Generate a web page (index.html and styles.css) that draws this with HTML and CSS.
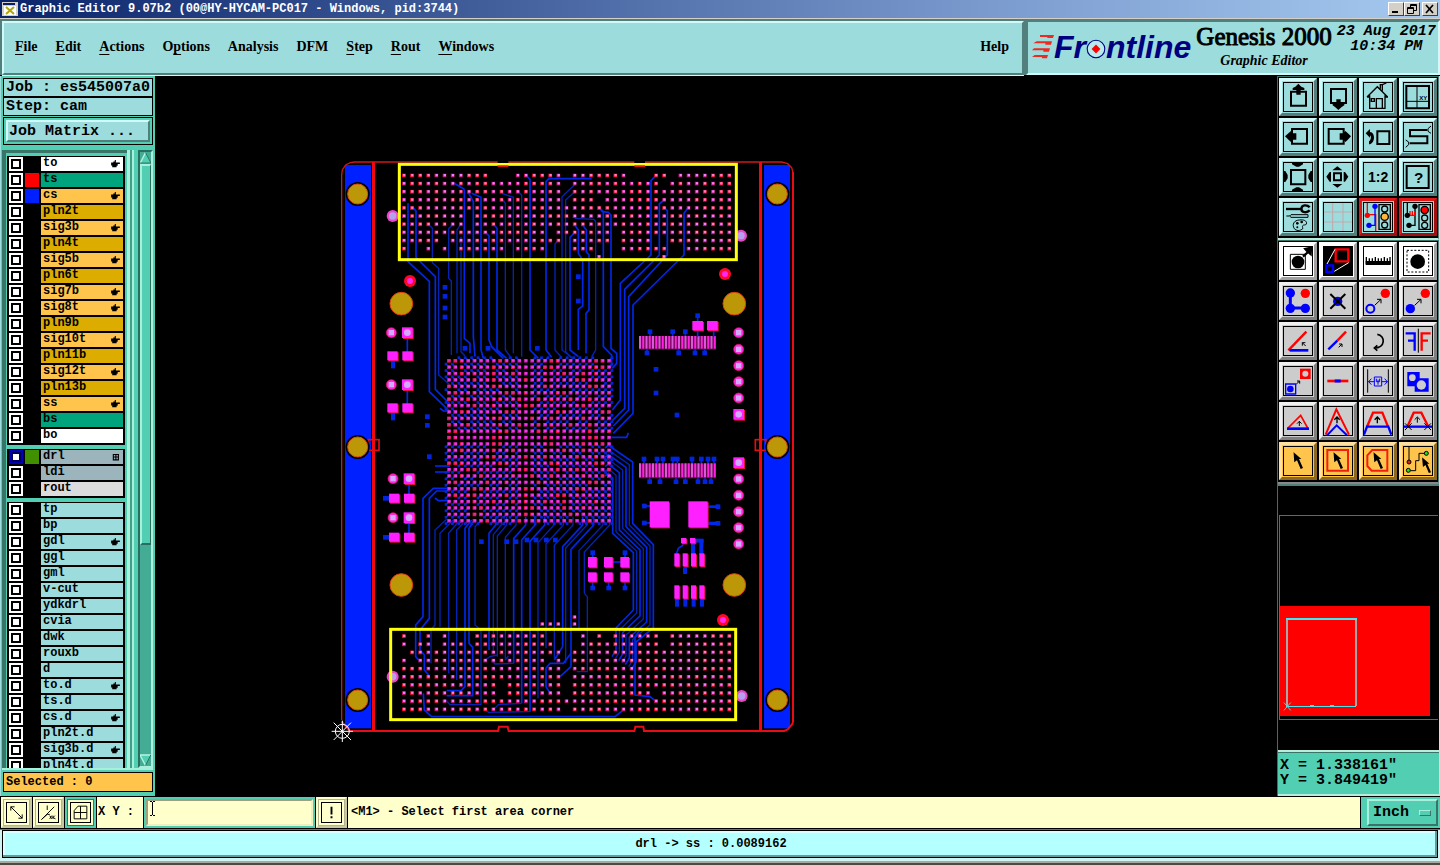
FILE: index.html
```html
<!DOCTYPE html>
<html lang="en">
<head>
<meta charset="utf-8">
<title>Graphic Editor 9.07b2</title>
<link rel="stylesheet" href="styles.css">
</head>
<body>
<svg class="defs" aria-hidden="true">
  <symbol id="hand" viewBox="0 0 24 22"><path d="M0 7H6V4H10V0H13V7H24V11H18V16H15V20H3V15H0Z"/></symbol>
  <symbol id="arrow" viewBox="0 0 30 54"><path d="M0 0L24 21H17L29 48L22 51L11 25L3 31Z"/></symbol>
</svg>
<div class="app">
  <header class="titlebar">
    <svg class="app-icon" viewBox="0 0 16 14"><path d="M0 0H16V14H0Z" fill="#d4d0c8"/><path d="M1 1H13V3H1Z" fill="#0a1c6c"/><path d="M2 4H14V13H2Z" fill="#fff"/><path d="M4 5L12 12M12 5L4 12" stroke="#b0a800" stroke-width="2"/></svg>
    <h1>Graphic Editor 9.07b2 (00@HY-HYCAM-PC017 - Windows, pid:3744)</h1>
    <div class="win-buttons">
      <button aria-label="Minimize"><svg viewBox="0 0 12 10"><path d="M2 8H8" stroke="#000" stroke-width="2"/></svg></button>
      <button aria-label="Restore"><svg viewBox="0 0 12 10"><path d="M4.500 3V.5H10.500V6.500H8M4.500 1.500H10.500M1.500 3.500H7.500V9.500H1.500ZM1.500 4.500H7.500" fill="none" stroke="#000"/></svg></button>
      <button class="close" aria-label="Close"><svg viewBox="0 0 12 10"><path d="M2 1L9 9M9 1L2 9" stroke="#000" stroke-width="1.700"/></svg></button>
    </div>
  </header>

  <div class="header">
    <nav class="menubar">
      <button><u>F</u>ile</button><button><u>E</u>dit</button><button><u>A</u>ctions</button><button>O<u>p</u>tions</button><button>Analysis</button><button>DFM</button><button><u>S</u>tep</button><button><u>R</u>out</button><button><u>W</u>indows</button><button class="help">Help</button>
    </nav>
    <div class="brand">
      <div class="logo">
        <svg class="speed" viewBox="0 0 66 72"><path d="M24 0H66L63 9H46V6H24ZM14 19H60L57 29H40V25H4ZM6 40H54L51 50H34V46H0ZM8 60H48L45 70H30V66H0Z" fill="#f02820"/></svg><span>Fr</span><svg class="target" viewBox="0 0 54 60"><circle cx="27" cy="30" r="24" fill="#b8ecec" stroke="#000080" stroke-width="3"/><path d="M27 18L39 30L27 42L15 30Z" fill="#f00"/></svg><span>ntline</span>
      </div>
      <div class="product"><strong>Genesis 2000</strong><em>Graphic Editor</em></div>
      <time>23 Aug 2017<br>10:34 PM</time>
    </div>
  </div>

  <div class="workspace">
    <aside class="sidebar">
      <div class="info">Job : es545007a0</div>
      <div class="info">Step: cam</div>
      <div class="matrix"><button>Job Matrix ...</button></div>
      <div class="layers">
        <div class="list">
          <div class="group">
            <label class="layer white"><input type="checkbox"><i></i><span>to</span><svg><use href="#hand"/></svg></label>
            <label class="layer mask"><input type="checkbox"><i class="red"></i><span>ts</span></label>
            <label class="layer signal"><input type="checkbox"><i class="blue"></i><span>cs</span><svg><use href="#hand"/></svg></label>
            <label class="layer plane"><input type="checkbox"><i></i><span>pln2t</span></label>
            <label class="layer signal"><input type="checkbox"><i></i><span>sig3b</span><svg><use href="#hand"/></svg></label>
            <label class="layer plane"><input type="checkbox"><i></i><span>pln4t</span></label>
            <label class="layer signal"><input type="checkbox"><i></i><span>sig5b</span><svg><use href="#hand"/></svg></label>
            <label class="layer plane"><input type="checkbox"><i></i><span>pln6t</span></label>
            <label class="layer signal"><input type="checkbox"><i></i><span>sig7b</span><svg><use href="#hand"/></svg></label>
            <label class="layer signal"><input type="checkbox"><i></i><span>sig8t</span><svg><use href="#hand"/></svg></label>
            <label class="layer plane"><input type="checkbox"><i></i><span>pln9b</span></label>
            <label class="layer signal"><input type="checkbox"><i></i><span>sig10t</span><svg><use href="#hand"/></svg></label>
            <label class="layer plane"><input type="checkbox"><i></i><span>pln11b</span></label>
            <label class="layer signal"><input type="checkbox"><i></i><span>sig12t</span><svg><use href="#hand"/></svg></label>
            <label class="layer plane"><input type="checkbox"><i></i><span>pln13b</span></label>
            <label class="layer signal"><input type="checkbox"><i></i><span>ss</span><svg><use href="#hand"/></svg></label>
            <label class="layer mask"><input type="checkbox"><i></i><span>bs</span></label>
            <label class="layer white"><input type="checkbox"><i></i><span>bo</span></label>
          </div>
          <div class="group">
            <label class="layer drill"><input type="checkbox" checked><i class="green"></i><span>drl</span><svg viewBox="0 0 24 22"><path d="M6 4H20V19H6ZM13 4V19M6 11H20" fill="none" stroke="#000" stroke-width="3"/></svg></label>
            <label class="layer drill"><input type="checkbox"><i></i><span>ldi</span></label>
            <label class="layer rout"><input type="checkbox"><i></i><span>rout</span></label>
          </div>
          <div class="group">
            <label class="layer"><input type="checkbox"><i></i><span>tp</span></label>
            <label class="layer"><input type="checkbox"><i></i><span>bp</span></label>
            <label class="layer"><input type="checkbox"><i></i><span>gdl</span><svg><use href="#hand"/></svg></label>
            <label class="layer"><input type="checkbox"><i></i><span>ggl</span></label>
            <label class="layer"><input type="checkbox"><i></i><span>gml</span></label>
            <label class="layer"><input type="checkbox"><i></i><span>v-cut</span></label>
            <label class="layer"><input type="checkbox"><i></i><span>ydkdrl</span></label>
            <label class="layer"><input type="checkbox"><i></i><span>cvia</span></label>
            <label class="layer"><input type="checkbox"><i></i><span>dwk</span></label>
            <label class="layer"><input type="checkbox"><i></i><span>rouxb</span></label>
            <label class="layer"><input type="checkbox"><i></i><span>d</span></label>
            <label class="layer"><input type="checkbox"><i></i><span>to.d</span><svg><use href="#hand"/></svg></label>
            <label class="layer"><input type="checkbox"><i></i><span>ts.d</span></label>
            <label class="layer"><input type="checkbox"><i></i><span>cs.d</span><svg><use href="#hand"/></svg></label>
            <label class="layer"><input type="checkbox"><i></i><span>pln2t.d</span></label>
            <label class="layer"><input type="checkbox"><i></i><span>sig3b.d</span><svg><use href="#hand"/></svg></label>
            <label class="layer"><input type="checkbox"><i></i><span>pln4t.d</span></label>
          </div>
        </div>
        <div class="scrollbar">
          <svg viewBox="0 0 12 12"><path d="M6 0L12 12H0Z" fill="#52cfb2"/><path d="M6 0L0 12" stroke="#b4f4e0" stroke-width="1.500"/><path d="M6 0L12 11.500H0" stroke="#2a6e60" fill="none"/></svg>
          <div class="thumb"></div>
          <svg viewBox="0 0 12 12"><path d="M0 0H12L6 12Z" fill="#52cfb2"/><path d="M12 .5H0L6 12" stroke="#b4f4e0" fill="none" stroke-width="1.500"/><path d="M12 0L6 12" stroke="#2a6e60"/></svg>
        </div>
      </div>
      <div class="selected">Selected : 0</div>
    </aside>

    <main class="canvas"><svg id="board" role="img" aria-label="Board layout"><g transform="translate(170 74) scale(.333333)"></g></svg></main>

    <aside class="tools">
      <div class="toolgrid view">
        <button aria-label="Pan up"><svg viewBox="0 0 90 90"><path d="M24 29H69V71H24Z" fill="none" stroke="#000" stroke-width="6"/><path d="M46 5L55 14L64 18V24H53V38H40V24H29V18L37 14Z"/></svg></button>
        <button aria-label="Pan down"><svg viewBox="0 0 90 90"><path d="M24 21H69V63H24Z" fill="none" stroke="#000" stroke-width="6"/><path d="M46 84L55 76L64 70V64H53V52H40V64H29V70L37 76Z"/></svg></button>
        <button aria-label="Home view"><svg viewBox="0 0 90 90"><path d="M12 45L43 14L74 45M20 40V79H66V40M20 79H66M52 20V8H58V26M58 8L70 3M12 45H22M65 45H75M40 79V50H58V79M25 50H34V58H25Z" fill="none" stroke="#000" stroke-width="4"/></svg></button>
        <button aria-label="Window XY"><svg viewBox="0 0 90 90"><path d="M10 12H78V79H10Z" fill="none" stroke="#000" stroke-width="6"/><path d="M42 12V79M10 58H78" stroke="#000" stroke-width="3"/><text x="49" y="54" font-size="18">XY</text></svg></button>
        <button aria-label="Pan left"><svg viewBox="0 0 90 90"><path d="M27 21H72V65H27Z" fill="none" stroke="#000" stroke-width="6"/><path d="M6 43L18 32L24 27L29 34H40V53H29L24 60L18 55Z"/></svg></button>
        <button aria-label="Pan right"><svg viewBox="0 0 90 90"><path d="M17 21H62V65H17Z" fill="none" stroke="#000" stroke-width="6"/><path d="M84 43L73 32L67 27L61 34H50V53H61L67 60L73 55Z"/></svg></button>
        <button aria-label="Previous view"><svg viewBox="0 0 90 90"><path d="M43 28H79V66H43Z" fill="none" stroke="#000" stroke-width="6"/><path d="M8 34L21 21V30C38 31 37 66 18 67V58C25 54 25 42 21 40V47Z"/></svg></button>
        <button aria-label="Serpentine"><svg viewBox="0 0 90 90"><path d="M73 24H21V43H73V64H20" fill="none" stroke="#000" stroke-width="6"/><path d="M84 12L75 20V28L84 34M8 54L17 60V68L8 76" fill="none" stroke="#000" stroke-width="3"/></svg></button>
        <button aria-label="Zoom in"><svg viewBox="0 0 90 90"><path d="M24 24H67V67H24Z" fill="none" stroke="#000" stroke-width="6"/><path d="M27 3H60V7L48 14H40L27 7ZM27 87H60V83L48 76H40L27 83ZM3 27V60H7L14 49V39L7 27ZM87 27V60H83L76 49V39L83 27Z"/></svg></button>
        <button aria-label="Zoom out"><svg viewBox="0 0 90 90"><path d="M33 34H54V55H33Z" fill="none" stroke="#000" stroke-width="6"/><path d="M43 13L58 25H28ZM43 77L58 66H28ZM10 44L20 30H24V59H20ZM76 44L66 30H62V59H66Z"/></svg></button>
        <button aria-label="Scale one to two"><svg viewBox="0 0 90 90"><text x="15" y="60" font-size="42">1:2</text></svg></button>
        <button aria-label="Query"><svg viewBox="0 0 90 90"><path d="M11 12H77V78H11Z" fill="none" stroke="#000" stroke-width="6"/><text x="33" y="64" font-size="46">?</text></svg></button>
        <button aria-label="Settings"><svg viewBox="0 0 90 90"><path d="M9 21H58" stroke="#000" stroke-width="7"/><path d="M80 16C72 7 56 8 55 20S72 34 80 25" fill="none" stroke="#000" stroke-width="7"/><path d="M10 42H20L24 38H75V46H24L20 42M34 80C26 68 33 54 50 54C68 51 76 63 67 69C60 68 56 72 60 79C51 89 39 86 34 80Z" fill="none" stroke="#000" stroke-width="3"/><circle cx="43" cy="64" r="4"/><circle cx="56" cy="60" r="4"/><circle cx="43" cy="76" r="3"/></svg></button>
        <button aria-label="Grid"><svg viewBox="0 0 90 90"><path d="M29 0V90M60 0V90M0 30H90M0 60H90" stroke="#c4a8ac" stroke-width="3"/></svg></button>
        <button class="alert" aria-label="Net highlight"><svg viewBox="0 0 90 90"><path d="M13 0V38H38V90" stroke="#f00" stroke-width="4" fill="none"/><path d="M36 13V70H18" stroke="#00f" stroke-width="4" fill="none"/><circle cx="36" cy="13" r="8" fill="#00f"/><circle cx="13" cy="40" r="8" fill="#f00"/><circle cx="18" cy="70" r="8" fill="#00f"/><g fill="#9cdcdc" stroke="#000" stroke-width="4"><path d="M48 8H82V82H48Z"/><circle cx="65" cy="21" r="9"/><circle cx="65" cy="44" r="11" fill="#ffb83c"/><circle cx="65" cy="69" r="9"/></g></svg></button>
        <button class="alert" aria-label="Net check"><svg viewBox="0 0 90 90"><path d="M13 0V38M36 13V70H18" stroke="#000" stroke-width="4" fill="none"/><path d="M18 40H38M21 27V38M28 27V38M35 27V38" stroke="#f00" stroke-width="4"/><circle cx="36" cy="13" r="8"/><circle cx="13" cy="40" r="8"/><circle cx="18" cy="70" r="8"/><g fill="#9cdcdc" stroke="#000" stroke-width="4"><path d="M48 8H82V82H48Z"/><circle cx="65" cy="24" r="11" fill="#f00"/><circle cx="65" cy="48" r="9"/><circle cx="65" cy="70" r="9"/></g></svg></button>
      </div>
      <div class="toolgrid edit">
        <button class="white" aria-label="Select pad"><svg viewBox="0 0 90 90"><path d="M22 25H67V70H22Z" fill="none" stroke="#000" stroke-width="3"/><circle cx="45" cy="48" r="19"/><path d="M60 32L75 18L67 9L84 5L83 24L76 18" stroke="#000" stroke-width="7"/></svg></button>
        <button class="white" aria-label="Area select"><svg viewBox="0 0 90 90"><path d="M0 0H90V90H0Z"/><path d="M38 10H76V46H38Z" fill="none" stroke="#f00" stroke-width="7"/><path d="M10 58H30V78H10Z" fill="none" stroke="#00f" stroke-width="7"/><path d="M12 54L36 10M34 76L77 50" stroke="#fff" stroke-width="3"/></svg></button>
        <button class="white" aria-label="Measure"><svg viewBox="0 0 90 90"><path d="M10 33V54M19 37V54M28 37V54M37 33V54M46 37V54M55 37V54M64 33V54M73 37V54M81 33V54" fill="none" stroke="#000" stroke-width="4"/><path d="M8 45H83V57H8Z"/></svg></button>
        <button class="white" aria-label="Feature frame"><svg viewBox="0 0 90 90"><path d="M12 13H77V78H12Z" fill="none" stroke="#000" stroke-width="3" stroke-dasharray="6 5"/><circle cx="44" cy="47" r="22"/></svg></button>
        <button aria-label="Add line"><svg viewBox="0 0 90 90"><path d="M22 22V66H67" fill="none" stroke="#00f" stroke-width="9"/><g fill="#00f"><circle cx="22" cy="21" r="14"/><circle cx="22" cy="67" r="14"/><circle cx="67" cy="67" r="14"/></g><circle cx="67" cy="22" r="14" fill="#f00"/></svg></button>
        <button aria-label="Delete"><svg viewBox="0 0 90 90"><circle cx="44" cy="46" r="14" fill="#00f"/><path d="M22 24L67 68M67 24L22 68" stroke="#000" stroke-width="6"/></svg></button>
        <button aria-label="Move"><svg viewBox="0 0 90 90"><circle cx="67" cy="22" r="14" fill="#f00"/><circle cx="22" cy="68" r="12" fill="none" stroke="#00f" stroke-width="6"/><path d="M35 58L54 40M42 40H54V52" fill="none" stroke="#000" stroke-width="3"/></svg></button>
        <button aria-label="Copy"><svg viewBox="0 0 90 90"><circle cx="67" cy="22" r="14" fill="#f00"/><circle cx="22" cy="68" r="14" fill="#00f"/><path d="M35 58L54 40M42 40H54V52" fill="none" stroke="#000" stroke-width="3"/></svg></button>
        <button aria-label="Rotate line"><svg viewBox="0 0 90 90"><path d="M16 73L70 17" stroke="#f00" stroke-width="7"/><path d="M20 73H76" stroke="#00f" stroke-width="8"/><path d="M68 60L58 50M58 59V50H67" fill="none" stroke="#000" stroke-width="3"/></svg></button>
        <button aria-label="Extend line"><svg viewBox="0 0 90 90"><path d="M43 44L69 17" stroke="#f00" stroke-width="7"/><path d="M16 70L43 44" stroke="#00f" stroke-width="7"/><path d="M47 64L57 54M48 54H57V63" fill="none" stroke="#000" stroke-width="3"/></svg></button>
        <button aria-label="Rotate"><svg viewBox="0 0 90 90"><path d="M43 25C68 28 68 66 34 66M43 58L34 66L43 74" fill="none" stroke="#000" stroke-width="5"/></svg></button>
        <button aria-label="Mirror"><svg viewBox="0 0 90 90"><path d="M8 22H35V74M15 44H35" fill="none" stroke="#00f" stroke-width="7"/><path d="M83 22H56V74M75 44H56" fill="none" stroke="#f00" stroke-width="7"/><path d="M46 8V80" stroke="#000" stroke-width="3"/></svg></button>
        <button aria-label="Transform"><svg viewBox="0 0 90 90"><path d="M51 8H83V39H51Z" fill="#f00"/><circle cx="67" cy="23" r="9" fill="#ccc"/><path d="M8 54H38V84H8Z" fill="none" stroke="#00f" stroke-width="4"/><circle cx="22" cy="69" r="10" fill="#00f"/><path d="M40 54L49 46M42 45H50V53" fill="none" stroke="#000" stroke-width="3"/></svg></button>
        <button aria-label="Merge lines"><svg viewBox="0 0 90 90"><path d="M13 45H76" stroke="#f00" stroke-width="8"/><path d="M35 45H53" stroke="#00f" stroke-width="9"/></svg></button>
        <button aria-label="Spacing"><svg viewBox="0 0 90 90"><path d="M14 10V80M76 10V80" stroke="#000" stroke-width="3"/><path d="M16 47H34M74 47H56M25 38L17 47L25 56M65 38L73 47L65 56M34 33H56V60H34ZM40 38V47H50V38M45 41V56" fill="none" stroke="#00f" stroke-width="3"/></svg></button>
        <button aria-label="Union"><svg viewBox="0 0 90 90"><path d="M13 18H50V37H77V77H35V61H13Z" fill="#00f"/><circle cx="28" cy="35" r="10" fill="#ccc"/><circle cx="55" cy="57" r="14" fill="#ccc"/></svg></button>
        <button aria-label="Triangle"><svg viewBox="0 0 90 90"><path d="M15 66L53 28L74 66" fill="none" stroke="#f00" stroke-width="5"/><path d="M12 68H78" stroke="#00f" stroke-width="8"/><path d="M49 60V46M42 53L49 46L56 53" fill="none" stroke="#000" stroke-width="3"/></svg></button>
        <button aria-label="Raise corner"><svg viewBox="0 0 90 90"><path d="M8 86L40 10L78 86" fill="none" stroke="#f00" stroke-width="6"/><path d="M12 88L41 58L72 88" fill="none" stroke="#00f" stroke-width="6"/><path d="M42 52V34M34 41L42 33L50 41" fill="none" stroke="#000" stroke-width="4"/></svg></button>
        <button aria-label="Raise segment"><svg viewBox="0 0 90 90"><path d="M12 62L30 20H58L75 62" fill="none" stroke="#f00" stroke-width="7"/><path d="M3 86L12 62H76L85 86" fill="none" stroke="#00f" stroke-width="7"/><path d="M43 52V34M35 41L43 33L51 41" fill="none" stroke="#000" stroke-width="4"/></svg></button>
        <button aria-label="Cut segment"><svg viewBox="0 0 90 90"><path d="M14 60L32 20H55L75 60" fill="none" stroke="#f00" stroke-width="7"/><path d="M2 62H88" stroke="#00f" stroke-width="7"/><path d="M43 50V34M35 41L43 33L51 41M6 52L26 72M26 52L6 72M64 52L84 72M84 52L64 72" fill="none" stroke="#000" stroke-width="3"/></svg></button>
        <button class="amber" aria-label="Pointer"><svg viewBox="0 0 90 90"><use href="#arrow" x="31" y="18" width="30" height="54"/></svg></button>
        <button class="amber" aria-label="Rectangle select"><svg viewBox="0 0 90 90"><path d="M13 12H75V74H13Z" fill="none" stroke="#f02010" stroke-width="6"/><use href="#arrow" x="31" y="18" width="30" height="54"/></svg></button>
        <button class="amber" aria-label="Polygon select"><svg viewBox="0 0 90 90"><path d="M28 12H73V74H26L13 60V28Z" fill="none" stroke="#f02010" stroke-width="6"/><use href="#arrow" x="31" y="18" width="30" height="54"/></svg></button>
        <button class="amber" aria-label="Net select"><svg viewBox="0 0 90 90"><path d="M18 0V48M16 74H38V44H48V22H68" fill="none" stroke="#000" stroke-width="3"/><g stroke="#000" stroke-width="3"><circle cx="18" cy="48" r="6" fill="#e02010"/><circle cx="16" cy="73" r="6" fill="#20e020"/><circle cx="70" cy="22" r="6" fill="#20e020"/></g><use href="#arrow" x="56" y="34" width="30" height="50"/></svg></button>
      </div>
      <div class="overview">
        <svg viewBox="0 0 161 267"><g shape-rendering="crispEdges"><path d="M161 29.500H.5V236.500H161" fill="none" stroke="#3c8c20"/><path d="M1 121H153V233H1Z" fill="#f00"/><path d="M8 135V223M78 135V223" stroke="#a8a8a8" stroke-width="2"/><path d="M7 135H79M7 223H78M31 222H35M52 222H56" stroke="#40e8f0" stroke-width="2"/></g><path d="M5 219L12 227M12 219L5 227" stroke="#40e0e8"/></svg>
      </div>
      <output class="coords">X = 1.338161"<br>Y = 3.849419"</output>
    </aside>
  </div>

  <form class="command">
    <button type="button" aria-label="Snap corner"><svg viewBox="0 0 60 60"><path d="M12 12L48 48M12 24V12H24M36 48H48V36" fill="none" stroke="#000" stroke-width="3"/></svg></button>
    <button type="button" aria-label="Snap angle"><svg viewBox="0 0 60 60"><path d="M8 52L48 12M26 8V22M8 52L26 36H34M34 40L40 50M40 40L34 50M44 50V40M50 40L44 46L52 50" fill="none" stroke="#000" stroke-width="3"/></svg></button>
    <button type="button" class="active" aria-label="Snap grid"><svg viewBox="0 0 60 60"><path d="M22 10H50V50H10V24ZM30 10V50M10 30H50" fill="none" stroke="#000" stroke-width="3"/></svg></button>
    <label for="xy">X Y :</label>
    <div class="field"><input id="xy" type="text"><svg viewBox="0 0 7 15" aria-hidden="true"><path d="M1 .5H3M4 .5H6M3.500 1V14M1 14.500H3M4 14.500H6" stroke="#000" fill="none"/></svg></div>
    <button type="button" aria-label="Alert"><svg viewBox="0 0 60 60"><path d="M27 12H33V36H27ZM27 42H33V48H27Z"/></svg></button>
    <p>&lt;M1&gt; - Select first area corner</p>
    <div class="unit"><div class="unit-box"><select aria-label="Units"><option>Inch</option><option>mm</option></select><i></i></div></div>
  </form>
  <footer class="status"><div>drl -&gt; ss : 0.0089162</div></footer>
</div>
<script src="board.js"></script>
</body>
</html>
```
FILE: styles.css
```css
* { box-sizing: border-box; }
html, body { margin: 0; height: 100%; }
body { background: #000; color: #000; overflow: hidden; }
button { margin: 0; padding: 0; border: 0; background: none; color: inherit; font: inherit; }
button svg { display: block; }
.defs { position: absolute; width: 0; height: 0; }
.app { display: flex; flex-direction: column; height: 100vh; font-family: "Liberation Mono", monospace; }

.titlebar { flex: none; display: flex; align-items: center; height: 18px; padding: 0 2px; background: linear-gradient(90deg, #0a246a, #7898cc 67%, #a6caf0); }
.titlebar h1 { flex: 1; margin: 0 0 0 2px; color: #fff; font-size: 12px; line-height: 16px; font-weight: bold; }
.app-icon { width: 16px; height: 14px; }
.win-buttons { display: flex; }
.win-buttons button { width: 16px; height: 14px; padding: 1px; background: #d4d0c8; border: 1px solid; border-color: #fff #404040 #404040 #fff; }
.win-buttons svg { width: 12px; height: 10px; }
.win-buttons .close { margin-left: 2px; }

.header { flex: none; display: flex; height: 57px; border-top: 1px solid #d4d0c8; background: #527f7c; padding-top: 1px; }
.menubar { flex: 1; display: flex; align-items: center; gap: 18px; margin: 1px 0 0 2px; padding: 0 13px 2px 11px; background: #9cdcdc; border: 2px solid; border-color: #d0fafa #527f7c #527f7c #d0fafa; box-shadow: 0 1px #d0fafa; font: bold 14px/18px "Liberation Serif", serif; }
.menubar u { text-underline-offset: 3px; }
.menubar .help { margin-left: auto; }
.brand { width: 414px; display: flex; margin-left: 2px; padding: 2px 0 0 4px; background: #9cdcdc; border: 2px solid; border-color: #527f7c #d0fafa #d0fafa #527f7c; }
.logo { display: flex; align-items: center; height: 46px; color: #000080; font: italic bold 32px/40px "Liberation Sans", sans-serif; }
.logo .speed { width: 22px; height: 24px; }
.logo .target { width: 20px; height: 22px; margin-top: 4px; }
.product { display: flex; flex-direction: column; align-items: center; margin-left: 5px; font-family: "Liberation Serif", serif; white-space: nowrap; }
.product strong { font-size: 25px; line-height: 26px; font-weight: normal; -webkit-text-stroke: 1px; }
.product em { font-size: 14px; line-height: 22px; font-weight: bold; }
.brand time { flex: 1; padding-left: 3px; text-align: center; white-space: nowrap; font: italic bold 15px/15px "Liberation Mono", monospace; }

.workspace { flex: 1; display: flex; min-height: 0; padding-top: 1px; }
.sidebar { width: 155px; display: flex; flex-direction: column; padding: 2px 2px 3px 1px; background: #52cfb2; border-left: 1px solid #9cdcdc; }
.info { flex: none; height: 19px; margin: 0 0 0 1px; padding-left: 2px; border: 1px solid #000; background: #9cdcdc; font-size: 15px; line-height: 17px; font-weight: bold; white-space: nowrap; }
.matrix { flex: none; height: 28px; margin: 1px 0 5px 1px; padding: 2px; border: 1px solid #000; }
.matrix button { width: 100%; height: 22px; padding-left: 1px; border: 2px solid; border-color: #d0fafa #527f7c #527f7c #d0fafa; background: #9cdcdc; font-size: 15px; line-height: 17px; font-weight: bold; text-align: left; }
.layers { flex: 1; display: flex; min-height: 0; border-bottom: 2px solid #a8f0dc; background: linear-gradient(90deg, transparent 125px, #a8f0dc 125px 128px, #3f9f88 128px 130px, #a8f0dc 130px 132px, #52cfb2 132px); }
.list { width: 125px; overflow: hidden; display: flex; flex-direction: column; gap: 4px; padding: 3px 2px 0 4px; border-top: 3px solid #387468; border-left: 1px solid #387468; box-shadow: inset 3px 0 #387468; }
.group { flex: none; padding: 1px 2px 0; background: #000; }
.layer { display: flex; gap: 2px; align-items: center; height: 14px; margin-bottom: 2px; --fill: #9cdcdc; }
.layer input { appearance: none; width: 14px; height: 14px; margin: 0; background: linear-gradient(#fff, #fff) center / 6px 6px no-repeat, linear-gradient(#000, #000) center / 10px 10px no-repeat, #fff; }
.layer input:checked { background: linear-gradient(#fff, #fff) center / 6px 6px no-repeat, linear-gradient(#000060, #000060) center / 10px 10px no-repeat, #0000b4; }
.layer i { width: 14px; height: 14px; }
.layer span { flex: 1; height: 14px; padding-left: 2px; background: var(--fill); font-size: 12px; line-height: 13px; font-weight: bold; }
.layer svg { width: 12px; height: 14px; margin-left: -2px; padding: 3px 3px 3px 0; background: var(--fill); }
.layer .red { background: #f00; }
.layer .blue { background: #0020ff; }
.layer .green { background: #409000; }
.layer.white { --fill: #fff; }
.layer.mask { --fill: #00a47c; }
.layer.signal { --fill: #ffc44c; }
.layer.plane { --fill: #dcac00; }
.layer.drill { --fill: #9cb4bc; }
.layer.rout { --fill: #dcdcdc; }
.scrollbar { width: 15px; margin-left: auto; display: flex; flex-direction: column; background: #44ac94; border: 2px solid; border-color: #2a6e60 #a8f0dc #a8f0dc #2a6e60; }
.scrollbar svg { flex: none; width: 11px; height: 12px; }
.thumb { height: 381px; margin-bottom: auto; background: #52cfb2; border: 1px solid; border-width: 2px 1px 2px 2px; border-color: #a8f0dc #2a6e60 #2a6e60 #a8f0dc; }
.selected { flex: none; height: 20px; margin: 2px 0 1px 1px; padding-left: 2px; border: 1px solid #000; background: #ffc44c; font-size: 12px; line-height: 18px; font-weight: bold; }

.canvas { flex: 1; min-width: 0; background: #000; }
.canvas svg { display: block; width: 100%; height: 100%; }

.tools { width: 163px; display: flex; flex-direction: column; border-left: 1px solid #387468; border-right: 1px solid #b8ecdc; }
.toolgrid { display: grid; grid-template-columns: repeat(4, 38px); gap: 2px; padding: 1px 1px 2px; border-top: 1px solid #387468; border-right: 1px solid #527f7c; }
.toolgrid.view { border-bottom: 2px solid #b8ecdc; }
.toolgrid.edit { border-bottom: 2px solid #888; }
.toolgrid button { width: 38px; height: 38px; padding: 1px; border: 3px solid; border-color: #d0fafa #527f7c #527f7c #d0fafa; background: #9cdcdc; }
.toolgrid.edit button { border-color: #f0f0f0 #808080 #808080 #f0f0f0; background: #ccc; }
.toolgrid svg { width: 30px; height: 30px; outline: 1px solid #000; outline-offset: -1px; font-family: "Liberation Sans", sans-serif; font-weight: bold; }
.toolgrid button.alert { border-color: #e01818 #a01010 #a01010 #e01818; }
.toolgrid.edit .white { background: #fff; border-color: #fff #a0a0a0 #a0a0a0 #fff; }
.toolgrid.edit .amber { background: #ffc44c; border-color: #ffe0a0 #8c6820 #8c6820 #ffe0a0; }
.overview { flex: 1; min-height: 0; border-top: 2px solid #527f7c; border-bottom: 2px solid #b8ecdc; }
.overview svg { display: block; width: 100%; height: 100%; }
.coords { display: block; flex: none; height: 44px; padding: 5px 0 0 2px; background: #52cfb2; border-top: 1px solid #387468; border-bottom: 2px solid #b8ecdc; font-size: 15px; line-height: 15px; font-weight: bold; }

.command { flex: none; display: flex; gap: 1px; height: 33px; margin: 0; padding: 1px 0 1px 1px; background: #000; font: bold 12px/16px "Liberation Mono", monospace; }
.command > * { background: #ffffcc; }
.command button { width: 31px; padding: 3px; border: 2px solid; border-color: #ffffcc #c8c8a0 #c8c8a0 #ffffcc; outline: 1px solid #b4b490; outline-offset: -3px; }
.command button svg { width: 21px; height: 21px; border: 1px solid #000; }
.command .active { border-color: #52cfb2; outline-color: #387468; }
.command label { width: 46px; padding: 7px 0 0 1px; white-space: nowrap; }
.command .field { position: relative; width: 171px; padding: 2px; background: #52cfb2; }
.field input { width: 100%; height: 27px; padding: 0 4px; border: 2px solid; border-color: #a0a080 #f0f0c0 #f0f0c0 #a0a080; border-radius: 0; background: #ffffcc; font: bold 12px "Liberation Mono", monospace; }
.field svg { position: absolute; left: 5px; top: 4px; width: 7px; height: 15px; }
.command p { flex: 1; margin: 0; padding: 7px 3px; }
.command .unit { width: 79px; padding: 2px; background: #52cfb2; }
.unit-box { display: flex; align-items: center; height: 27px; margin-left: 4px; border: 2px solid; border-color: #a8f0dc #387468 #387468 #a8f0dc; }
.unit select { appearance: none; width: 46px; margin: 0 0 0 4px; padding: 0; border: 0; background: none; color: #000; font: bold 15px/20px "Liberation Mono", monospace; }
.unit-box i { width: 12px; height: 6px; border: 1px solid; border-color: #a8f0dc #387468 #387468 #a8f0dc; }
.status { flex: none; height: 36px; padding: 1px 2px 5px; background: linear-gradient(#527f7c 1px, #d0f4f4 1px 32px, #a8a8a0 32px 34px, #504840 34px); }
.status div { height: 28px; padding-right: 18px; border: 1px solid #000; background: #b4ffff; box-shadow: inset -2px -2px #649c9c, inset 2px 2px #d8ffff; text-align: center; font: bold 12px/26px "Liberation Mono", monospace; }
```
FILE: board.js
```js
// Board geometry is kept in thirds of a pixel; the parent group scales it down.
const root = document.querySelector('#board g');
let out = '';
const rect = (x, y, w, h, fill, extra = '') => { out += `<rect x="${x}" y="${y}" width="${w}" height="${h}" fill="${fill}" ${extra}/>`; };
const circle = (x, y, r, fill, extra = '') => { out += `<circle cx="${x}" cy="${y}" r="${r}" fill="${fill}" ${extra}/>`; };
const line = (pts, w = 5, color = '#0028e8') => { out += `<polyline points="${pts}" fill="none" stroke="${color}" stroke-width="${w}"/>`; };
const thin = pts => line(pts, 4, '#0424b4');
const via = (x, y) => rect(x - 7, y - 7, 14, 14, '#0024e0');
const pad = (x, y, hot) => {
  rect(x - 6, y - 5, 11, 11, hot ? '#e80c30' : '#c01068');
  rect(x - 3, y - 4, 7, 7, hot ? '#ff80c8' : '#e884ff');
};
const smd = (x, y, w, h) => { rect(x + 3, y + 3, w, h, '#e8103c'); rect(x, y, w, h, '#ff20ff'); };
const pin = (x, y) => { circle(x, y, 15, '#ff28d8', 'stroke="#e01060" stroke-width="2"'); rect(x - 8, y - 8, 16, 16, '#d4a8ff'); };
const squarePin = (x, y) => { smd(x - 16, y - 16, 32, 32); circle(x, y, 10, '#d4a8ff'); };

// side rails
rect(60, 45, 78, 1690, '#0020ff');
rect(1317, 45, 78, 1690, '#0020ff');

// traces between the upper connector and the array
['249,160 249,335 313,394 313,725 375,785', '262,170 273,183 273,322 331,380 331,718 375,762',
 '418,118 418,565 435,580 435,610', '430,128 445,155 445,560 450,620', '440,130 468,142 468,600 475,625',
 '481,245 492,258 492,570 500,590 535,625', '505,222 516,235 516,600 545,625', '603,76 615,88 615,600 640,625',
 '800,86 672,86 663,95 663,600 680,622', '749,248 735,262 735,600 760,620',
 '822,172 835,185 835,590 860,615 860,650', '822,172 832,185 850,187 858,195 858,595 875,610 875,640 862,655',
 '993,76 978,92 978,315 886,400 886,750 862,780', '1017,150 1003,162 1003,315 899,418 899,775 862,812',
 '1017,172 1027,182 1027,315 911,440 911,780 865,828', '1090,172 1077,190 1077,315 924,465 924,790 865,850',
 '860,862 905,862 910,848', '385,98 418,118', '749,225 760,240 760,310 773,330 773,468 760,478 760,600',
 '773,225 784,240 784,305 792,315 792,480 783,490 783,610'].forEach(p => line(p));
['310,222 322,235 322,338 341,355 341,675 375,705', '385,222 371,236 371,385 379,393 379,615',
 '408,222 396,240 396,610', '408,260 408,605 420,618', '530,145 541,160 541,600 560,625',
 '530,130 565,142 565,610', '580,125 590,135 590,620', '700,270 690,282 690,600 710,622',
 '755,98 711,140 711,600 740,622', '749,125 722,150 722,605 740,625',
 '749,205 807,208 812,215 812,600 800,620'].forEach(thin);

// traces between the array and the lower connector
['375,1015 325,1015 294,1045 294,1400 272,1425 272,1520 285,1535',
 '375,1023 335,1023 313,1045 313,1405 285,1440 285,1500 298,1515 298,1560 311,1575',
 '440,1110 420,1135 420,1610 408,1622 365,1622', '450,1110 432,1135 432,1480 443,1492 443,1637 365,1637',
 '295,1630 298,1680 320,1700 870,1700 895,1680', '375,948 330,948', '375,966 330,966', '375,1052 340,1052 330,1044',
 '345,775 355,783 375,783'].forEach(p => line(p));
['365,1108 330,1140 330,1425 318,1440 318,1540', '385,1110 345,1150 345,1430', '405,1110 371,1150 371,1570',
 '415,1120 395,1140 395,1590', '470,1110 450,1130 450,1425 468,1440 468,1664 375,1664 362,1650'].forEach(thin);
[[492, 1500, 0], [505, 1510, 1], [517, 1520, 1], [541, 1530, 1], [566, 1540, 0], [590, 1660, 0], [615, 1685, 0],
 [639, 1645, 1], [663, 1495, 1], [688, 1525, 1], [713, 1490, 0], [722, 1540, 1], [738, 1550, 0], [762, 1440, 1], [778, 1330, 1]]
  .forEach(([x, end, slim], i) => {
    const d = 20 + i * 4;
    const pts = `${x + d},1100 ${x + d},1125 ${x},${1150 + i * 4} ${x},${end}`;
    slim ? thin(pts) : line(pts);
  });
thin('778,1330 787,1340 787,1565 755,1565');
line('713,1490 688,1530'); thin('590,1660 520,1664 505,1680'); thin('615,1685 490,1687 480,1678');
thin('566,1540 510,1542 500,1530'); line('738,1510 715,1540 675,1540 663,1555 663,1610 676,1630');
line('738,1550 705,1580'); thin('541,1530 550,1518'); thin('517,1515 495,1520 483,1528');
for (let i = 0; i < 7; i++) {
  const x = 863 + i * 10, low = x + 62;
  const pts = `840,${978 - i * 14} 850,${970 - i * 14} ${x},${984 - i * 8} ${x},${1150 - i * 5} ${low},${1208 - i * 4} ${low},${1380 + i * 9} ${low - 52},${1434 + i * 7} ${low - 52},${1500 + i * 6} ${low - 64},${1520 + i * 6}`;
  i % 2 ? thin(pts) : line(pts);
}
line('945,1440 930,1460 930,1635 975,1640 990,1652');

// ball grid array with fan-out stubs
const mix = (r, c) => ((r * 7919 + c * 104729 + r * r * 31 + c * c * r * 17) >>> 2) % 17;
for (let r = 0; r < 26; r++) for (let c = 0; c < 26; c++) {
  const x = 372 + c * 19.2, y = 632 + r * 19.2;
  if (r !== 12 && c !== 12 && mix(r, c) > 3) {
    const dx = c < 12 ? -9 : 9, dy = r < 12 ? -9 : 9;
    line(`${x},${y} ${x + dx},${y + dy}`, 5, '#0424d8');
    rect(x + dx - 4, y + dy - 4, 8, 8, '#0424d8');
  }
}
for (let r = 0; r < 26; r++) for (let c = 0; c < 26; c++) {
  const x = 372 + c * 19.2, y = 632 + r * 19.2, n = mix(r, c);
  rect(x - 6, y - 5, 11, 11, n < 5 ? '#f01038' : '#b41490');
  rect(x - 3, y - 4, 8, 7, n < 3 ? '#d83098' : '#e83cf0');
}

// connector pin fields: columns left empty in each row
const field = (y0, empty) => empty.forEach((cols, r) => {
  const skip = new Set(cols);
  for (let c = 0; c < 41; c++) if (!skip.has(c)) pad(237 + c * 24.4, y0 + r * 24.4, mix(r, c) < 8);
});
field(76, [[11, 12, 13, 20, 28, 29, 30, 33], [20, 32], [20], [20, 24], [], [8], [8], [18, 26], [5, 20, 26, 32, 31], [1, 2, 4, 6, 13, 18, 19, 20, 24, 25, 26, 33, 34]]);
field(1458, [[1, 2, 4, 6, 7, 8, 18, 19, 20, 21, 23, 25, 32], [1, 4, 8, 19, 20, 21, 32], [0, 20], [1, 18, 20], [20], [20], [12, 20], [12, 20, 31], [], [20]]);
[[652, 1422], [676, 1422], [700, 1422], [749, 1401], [749, 1422], [822, 320], [1017, 320]].forEach(p => pad(...p));

[[360, 412], [360, 439], [360, 474], [360, 501], [420, 595], [489, 595], [637, 595], [760, 380], [760, 453],
 [307, 800], [307, 826], [313, 920], [469, 1175], [545, 1175], [573, 1175], [606, 1170], [633, 1170], [664, 1170], [691, 1170],
 [993, 658], [993, 729], [1056, 795]].forEach(p => via(...p));

// discrete parts on the left edge
[[199, 548, 1], [199, 704, 1], [204, 986, 0], [204, 1103, 0]].forEach(([x, y, upper]) => {
  const drop = upper ? 70 : 59;
  line(`${x + 48},${y} ${x + 48},${y + drop}`);
  pin(x, y); squarePin(x + 48, y);
  upper ? rect(x - 1, y + 80, 12, 27, '#0024e0') : rect(x - 30, y + 52, 20, 14, '#0024e0');
  smd(x - 12, y + drop - 14, 31, 27); smd(x + 33, y + drop - 14, 31, 27);
});

// fine-pitch connectors
const comb = (y, h, above, below) => {
  above.forEach(x => { line(`${x + 705},${y - 12} ${x + 705},${y}`); via(x + 705, y - 13); });
  below.forEach(x => { line(`${x + 705},${y + h} ${x + 705},${y + h + 12}`); via(x + 705, y + h + 13); });
  rect(942, y, 231, h + 3, '#600848');
  for (let i = 0; i < 24; i++) rect(942 + i * 9.75, y, 6, h, i % 2 ? '#ff20e0' : '#d858d8');
};
comb(558, 38, [270, 338, 376], [261, 356, 405, 434]);
comb(940, 42, [252, 291, 309, 339, 352, 396, 424, 444, 462], [269, 300, 348, 376, 414, 435, 453]);
line('1118,495 1118,560'); line('1166,530 1166,560'); via(1118, 497);
smd(1102, 513, 32, 28); smd(1146, 513, 32, 28);

[548, 598, 647, 695, 744, 987, 1036, 1085, 1133, 1182].forEach(y => pin(1241, y));
squarePin(1241, 793); squarePin(1241, 938);

[[958, 1068], [958, 1119], [1179, 1070], [1179, 1120]].forEach(p => via(...p));
line('958,1068 980,1068'); line('958,1119 980,1119'); line('1148,1070 1175,1070', 8); line('1148,1120 1175,1120', 10);
smd(974, 1054, 58, 78); smd(1090, 1054, 58, 78);
line('1075,1185 1060,1195 1055,1210'); line('1104,1180 1104,1215', 12); line('1129,1170 1129,1215', 12); line('1112,1172 1136,1172', 12);
smd(1068, 1164, 16, 16); smd(1095, 1164, 16, 16);
rect(1074, 1252, 12, 20, '#0024e0');
for (let i = 0; i < 4; i++) {
  const x = 1048 + i * 25;
  smd(x, 1210, 15, 39);
  rect(x + 2, 1346, 12, 24, '#0024e0');
  smd(x, 1306, 15, 40);
}
line('850,1236 900,1236');
[789, 837, 886].forEach((x, i) => {
  if (i !== 1) { via(x + 14, 1208); line(`${x + 14},1208 ${x + 14},1225`); }
  via(x + 14, 1314); line(`${x + 14},1290 ${x + 14},1314`);
  smd(x, 1221, 26, 31); smd(x, 1267, 26, 28);
});

// outline
line('50,1710 50,75 52,60 62,45 76,38 88,36 1370,36 1388,41 1400,53 1404,68', 4, '#d01818');
line('1404,66 1404,1715 1402,1722 1388,1738 1378,1743 957,1743 955,1730 931,1730 928,1743 551,1743 548,1730 522,1730 519,1743 75,1743 50,1715', 6, '#e80c14');
rect(141, 36, 9, 1710, '#f0080c');
rect(1302, 36, 9, 1710, '#f0080c');
rect(130, 869, 32, 32, 'none', 'stroke="#e01010" stroke-width="5"');
rect(1291, 869, 32, 32, 'none', 'stroke="#e01010" stroke-width="5"');
[[98, 132], [1357, 132], [98, 891], [1357, 891], [98, 1650], [1357, 1650]].forEach(([x, y]) => {
  circle(x, y, 36, '#000'); circle(x, y, 30, '#bc9808', 'stroke="#e05010" stroke-width="3"');
});
[[229, 461], [1228, 461], [229, 1305], [1228, 1305]].forEach(([x, y]) => circle(x, y, 34, '#bc9808', 'stroke="#e04010" stroke-width="3"'));
[[255, 393], [1200, 372], [1194, 1410]].forEach(([x, y]) => { circle(x, y, 18, '#ff0828'); circle(x, y, 9, '#ff28f0'); });
[[203, 198], [1248, 257], [203, 1580], [1250, 1638]].forEach(([x, y]) => { circle(x, y, 18, '#e848c8'); circle(x, y, 11, '#b8a0f0'); });

// selection frames
out += '<g fill="none" stroke="#ffff10" stroke-width="9"><rect x="223" y="43" width="1011" height="286"/><rect x="197" y="1438" width="1035" height="271"/></g>';
rect(518, 33, 32, 6, '#000'); rect(928, 33, 32, 6, '#000');
rect(518, 46, 32, 5, '#e01010'); rect(928, 46, 32, 5, '#e01010');

// datum marker
out += '<g fill="none" stroke="#fff" stroke-width="3"><circle cx="52" cy="1744" r="21"/><path d="M20 1744H84M52 1712V1776M26 1718L78 1770M78 1718L26 1770"/></g>';
root.innerHTML = out;
```
